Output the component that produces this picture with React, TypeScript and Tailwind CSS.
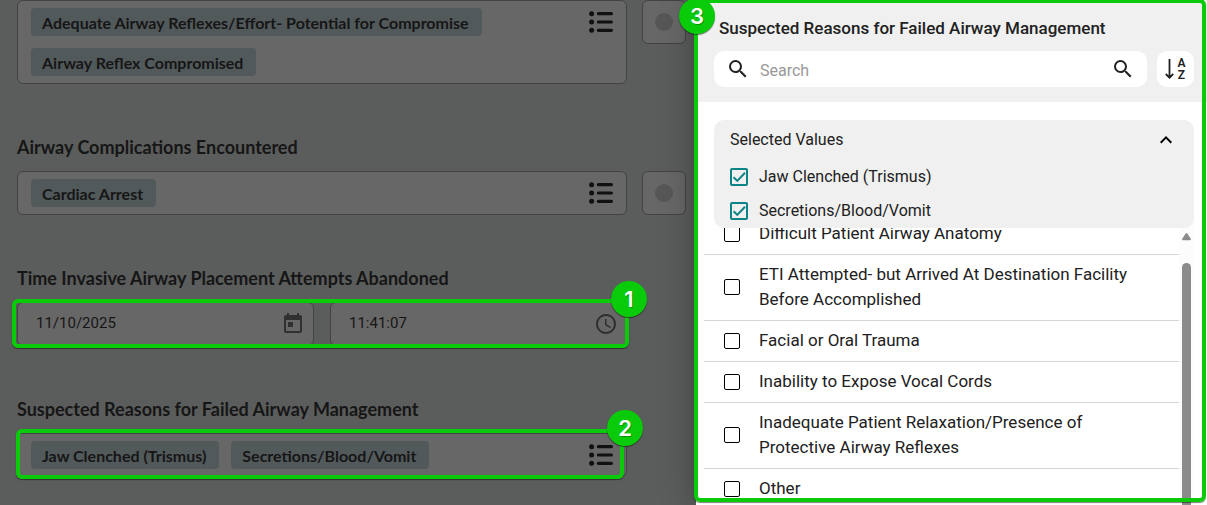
import { useState } from 'react';
import type { ReactNode } from 'react';
import { MdAccessTime, MdExpandLess, MdExpandMore, MdSearch, MdToday } from 'react-icons/md';

const selectedReasons = ['Jaw Clenched (Trismus)', 'Secretions/Blood/Vomit'];

const otherReasons = [
  'Difficult Patient Airway Anatomy',
  'ETI Attempted- but Arrived At Destination Facility Before Accomplished',
  'Facial or Oral Trauma',
  'Inability to Expose Vocal Cords',
  'Inadequate Patient Relaxation/Presence of Protective Airway Reflexes',
  'Other',
];

function ListIcon() {
  return (
    <svg width="24" height="22" viewBox="0 0 24 22" fill="#111" aria-hidden="true">
      <circle cx="2.6" cy="2.7" r="2.5" />
      <circle cx="2.6" cy="11" r="2.5" />
      <circle cx="2.6" cy="19.3" r="2.5" />
      <rect x="7.8" y="1.1" width="16.2" height="3.2" rx="1.6" />
      <rect x="7.8" y="9.4" width="16.2" height="3.2" rx="1.6" />
      <rect x="7.8" y="17.7" width="16.2" height="3.2" rx="1.6" />
    </svg>
  );
}

function StepBadge({ step, className }: { step: number; className: string }) {
  return (
    <span
      className={`absolute flex size-9 items-center justify-center rounded-full bg-[#0acb0a] font-['Inter',sans-serif] text-[22px] leading-none font-semibold text-white shadow-[0_1px_1px_rgba(0,0,0,0.5)] text-shadow-[1px_1px_0_rgba(0,0,0,0.3)] ${className}`}
    >
      {step}
    </span>
  );
}

function Highlight({ className }: { className: string }) {
  return (
    <div
      className={`pointer-events-none absolute rounded-md border-4 border-[#0acb0a] shadow-[0_1px_1px_rgba(0,0,0,0.5)] ${className}`}
    />
  );
}

function MultiSelect({ values, children }: { values: string[]; children?: ReactNode }) {
  return (
    <div className="relative flex flex-1 items-start rounded-md border border-[#434343] bg-[#676767] px-[13px] py-[7px]">
      <ul className="flex flex-1 flex-wrap gap-3">
        {values.map((value) => (
          <li key={value} className="h-7 rounded bg-[#52595b] pr-[13px] pl-[11px] text-base leading-[30px] font-bold">
            {value}
          </li>
        ))}
      </ul>
      <button type="button" aria-label="Choose values" className="flex h-7 items-center">
        <ListIcon />
      </button>
      {children}
    </div>
  );
}

function StatusButton() {
  return (
    <button
      type="button"
      aria-label="Not value"
      className="flex size-11 items-center justify-center rounded-md border border-[#434343] bg-[#676767]"
    >
      <span className="size-[18px] rounded-full bg-[#575757]" />
    </button>
  );
}

function FieldRow({ children, status = false }: { children: ReactNode; status?: boolean }) {
  return (
    <div className="flex items-start gap-[15px]">
      {children}
      {status ? <StatusButton /> : <div className="w-11" />}
    </div>
  );
}

function DateTimeInput({ label, value, icon }: { label: string; value: string; icon: ReactNode }) {
  return (
    <div className="flex h-11 min-w-0 flex-1 items-center rounded-md border border-[#434343] bg-[#676767] pr-2 pl-[18px]">
      <input
        type="text"
        aria-label={label}
        defaultValue={value}
        className="h-10 min-w-0 flex-1 bg-transparent pb-0.5 font-['Roboto',sans-serif] text-[15px] outline-none"
      />
      <button type="button" aria-label={`Pick ${label.toLowerCase()}`} className="text-[#303030]">
        {icon}
      </button>
    </div>
  );
}

function SelectedCheckbox({ label }: { label: string }) {
  return (
    <label className="flex h-[34px] items-center gap-[11px] text-base">
      <span className="grid size-[18px] place-items-center">
        <input
          type="checkbox"
          defaultChecked
          className="peer col-start-1 row-start-1 size-[18px] appearance-none rounded-xs border-2 border-[#0b8387] bg-[#f0f0f0]"
        />
        <svg
          viewBox="0 0 18 18"
          className="pointer-events-none invisible col-start-1 row-start-1 size-[18px] peer-checked:visible"
          fill="none"
          stroke="#0b8387"
          strokeWidth="2"
          aria-hidden="true"
        >
          <path d="M3.6 9.2 L7.3 12.9 L15 4.8" />
        </svg>
      </span>
      {label}
    </label>
  );
}

function ReasonRow({ label }: { label: string }) {
  return (
    <li className="border-b border-[#d6d6d6]">
      <label className="flex items-center gap-[19px] pt-[7px] pr-8 pb-2 pl-5 text-[17px] leading-[25px]">
        <input
          type="checkbox"
          className="size-4 shrink-0 appearance-none rounded-xs border border-black bg-white checked:border-[#0b8387] checked:bg-[#0b8387]"
        />
        {label}
      </label>
    </li>
  );
}

function ReasonsPanel() {
  const [open, setOpen] = useState(true);

  return (
    <aside className="relative flex w-[511px] shrink-0 flex-col bg-white font-['Roboto',sans-serif] text-[#212121] shadow-[0_0_32px_rgba(0,0,0,0.35)]">
      <header className="bg-[#f0f0f0] pt-4 pr-[13px] pb-[15px] pl-[18px]">
        <h2 className="mb-[11px] pl-[5px] text-[17px] leading-6 font-medium">
          Suspected Reasons for Failed Airway Management
        </h2>
        <div className="flex gap-[10px]">
          <div className="flex h-9 flex-1 items-center rounded-[10px] bg-white px-3">
            <MdSearch size={24} />
            <input
              type="text"
              aria-label="Search reasons"
              placeholder="Search"
              className="h-9 min-w-0 flex-1 bg-transparent px-[10px] pt-0.5 text-base outline-none placeholder:text-[#999]"
            />
            <button type="button" aria-label="Search">
              <MdSearch size={24} />
            </button>
          </div>
          <button
            type="button"
            aria-label="Sort alphabetically"
            className="flex h-9 w-[37px] items-center justify-center gap-[3px] rounded-[10px] bg-white"
          >
            <svg width="9" height="20" viewBox="0 0 9 20" fill="none" stroke="#212121" strokeWidth="1.8" aria-hidden="true">
              <path d="M4.5 0 V18.5 M0.8 15 L4.5 18.7 L8.2 15" />
            </svg>
            <span className="flex flex-col text-[12px] leading-3 font-semibold">
              <span className="block h-3 overflow-hidden">A</span>
              <span className="block h-3 overflow-hidden">Z</span>
            </span>
          </button>
        </div>
      </header>

      <section className="relative z-10 mt-[18px] mr-[13px] ml-[18px] rounded-[10px] bg-[#f0f0f0] px-4">
        <button type="button" onClick={() => setOpen(!open)} className="flex h-10 w-full items-center justify-between text-base">
          Selected Values
          {open ? <MdExpandLess size={24} color="#000" /> : <MdExpandMore size={24} color="#000" />}
        </button>
        {open && selectedReasons.map((reason) => <SelectedCheckbox key={reason} label={reason} />)}
      </section>

      {/* list is scrolled, so its first row runs under the selected values */}
      <div className="-mt-[14px] flex min-h-0 flex-1 pr-[13px] pl-2">
        <ul className="flex-1 overflow-hidden">
          {otherReasons.map((reason) => (
            <ReasonRow key={reason} label={reason} />
          ))}
        </ul>
        <div className="flex w-[15px] flex-col items-center bg-[#fcfcfc] pt-[19px]">
          <svg width="9" height="8" viewBox="0 0 9 8" fill="#8b8b8b" aria-hidden="true">
            <path d="M4.5 0 Q5 0 5.5 0.8 L8.8 5.8 Q9.2 7.2 8 7.2 H1 Q-0.2 7.2 0.2 5.8 L3.5 0.8 Q4 0 4.5 0 Z" />
          </svg>
          <div className="mt-[22px] w-[9px] flex-1 rounded-t-full bg-[#8b8b8b]" />
        </div>
      </div>

      <Highlight className="-top-px right-px bottom-[3px] -left-0.5 z-20" />
      <StepBadge step={3} className="-top-0.5 -left-[17px] z-20" />
    </aside>
  );
}

export default function App() {
  return (
    <div className="flex h-screen overflow-hidden bg-[#5b5d5c]">
      <main className="min-w-0 flex-1 pr-[10px] pl-[17px] font-['Lato',sans-serif] text-[#161616]">
        <FieldRow status>
          <MultiSelect
            values={['Adequate Airway Reflexes/Effort- Potential for Compromise', 'Airway Reflex Compromised']}
          />
        </FieldRow>

        <h3 className="mt-[51px] mb-3 text-lg leading-6 font-bold">Airway Complications Encountered</h3>
        <FieldRow status>
          <MultiSelect values={['Cardiac Arrest']} />
        </FieldRow>

        <h3 className="mt-[51px] mb-3 text-lg leading-6 font-bold">Time Invasive Airway Placement Attempts Abandoned</h3>
        <FieldRow>
          <div className="relative flex flex-1 gap-4">
            <DateTimeInput label="Date" value="11/10/2025" icon={<MdToday size={24} />} />
            <DateTimeInput label="Time" value="11:41:07" icon={<MdAccessTime size={24} />} />
            <Highlight className="-top-[3px] -right-0.5 -bottom-0.5 -left-[5px]" />
            <StepBadge step={1} className="-top-[21px] -right-5" />
          </div>
        </FieldRow>

        <h3 className="mt-[51px] mb-3 text-lg leading-6 font-bold">Suspected Reasons for Failed Airway Management</h3>
        <FieldRow>
          <MultiSelect values={selectedReasons}>
            <Highlight className="-top-[5px] right-0.5 -bottom-[3px] -left-0.5" />
            <StepBadge step={2} className="-top-[24px] -right-[17px]" />
          </MultiSelect>
        </FieldRow>
      </main>
      <ReasonsPanel />
    </div>
  );
}
